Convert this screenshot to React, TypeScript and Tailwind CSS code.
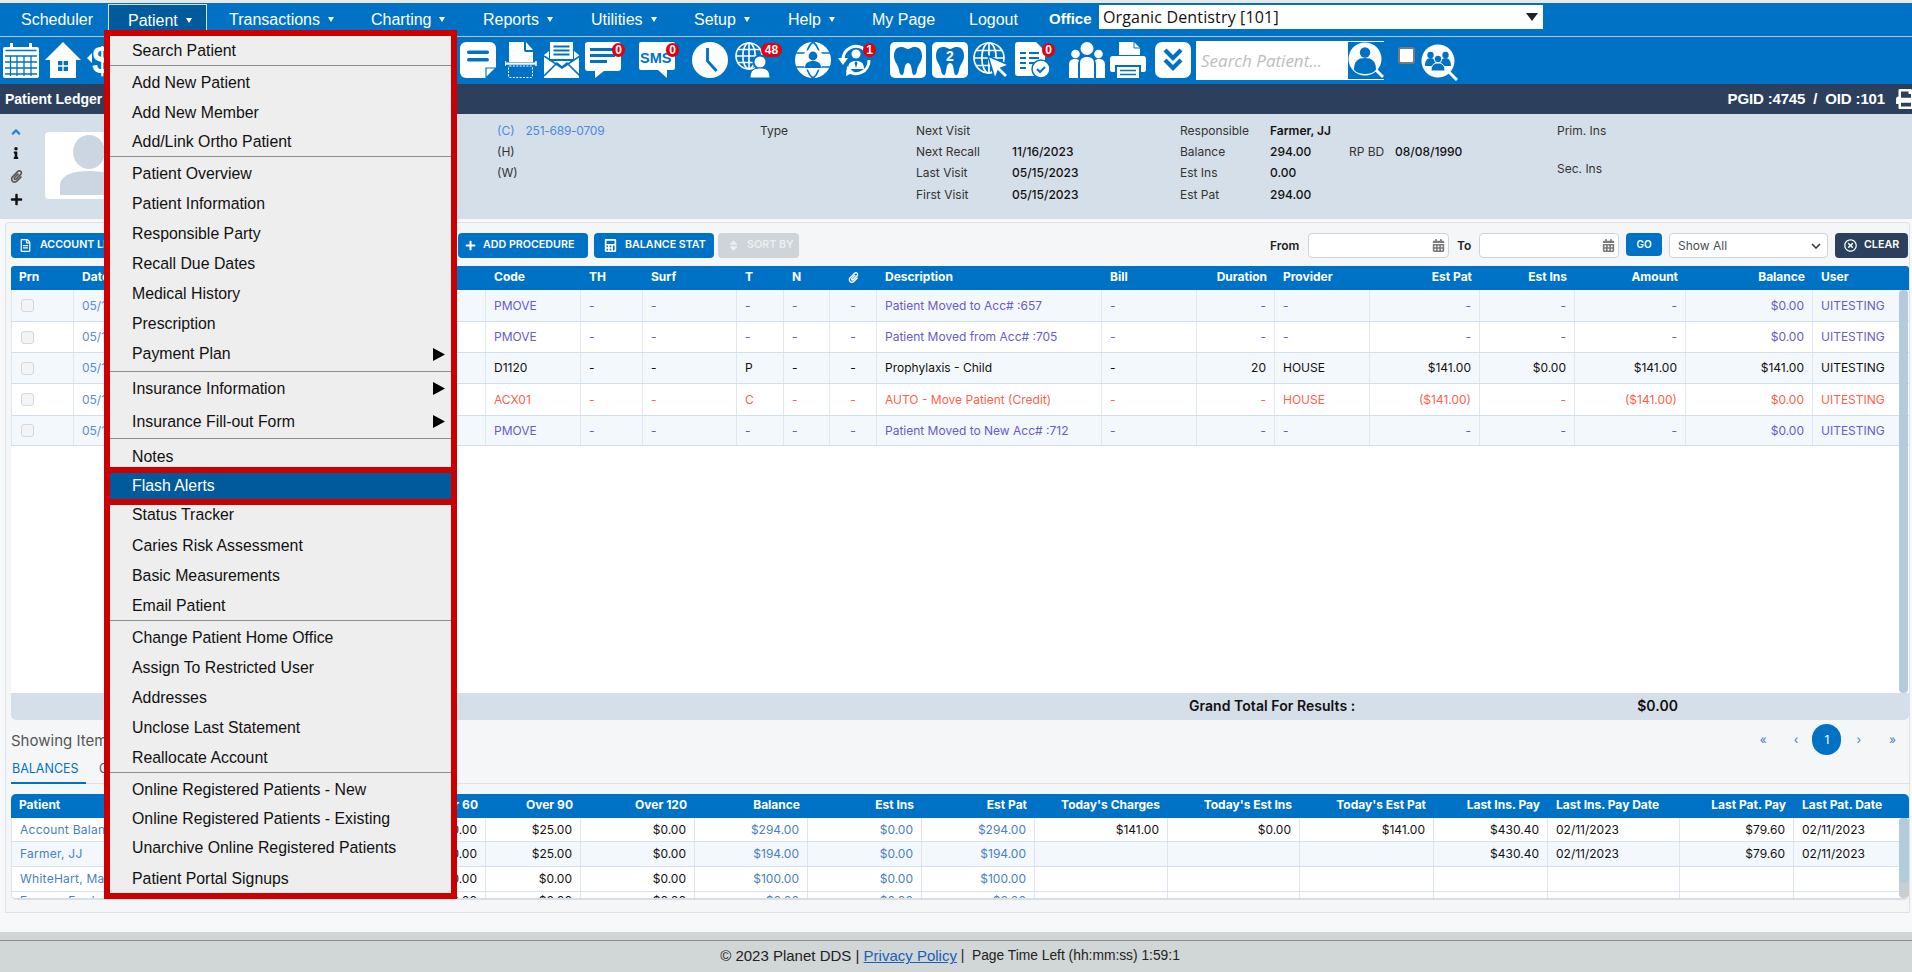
import React from "react";
import {
  FaAngleUp,
  FaCalculator,
  FaCalendarAlt,
  FaInfo,
  FaPaperclip,
  FaPlus,
  FaPrint,
  FaRegFileAlt,
  FaRegTimesCircle,
  FaSort,
} from "react-icons/fa";

const BL = "#0072c6";

function Svg({ children, w = 36 }: { children: React.ReactNode; w?: number }) {
  return (
    <svg viewBox={`0 0 ${w} 36`} width={w} height={36} className="block shrink-0" fill="#fff">
      {children}
    </svg>
  );
}

function Globe({ cx = 18, cy = 18, r = 17, color = "#fff", sw = 2 }: { cx?: number; cy?: number; r?: number; color?: string; sw?: number }) {
  return (
    <g fill="none" stroke={color} strokeWidth={sw}>
      <circle cx={cx} cy={cy} r={r} />
      <ellipse cx={cx} cy={cy} rx={r * 0.48} ry={r} />
      <path d={`M${cx} ${cy - r}V${cy + r}M${cx - r} ${cy}H${cx + r}M${cx - r * 0.88} ${cy - r * 0.5}H${cx + r * 0.88}M${cx - r * 0.88} ${cy + r * 0.5}H${cx + r * 0.88}`} />
    </g>
  );
}

const toothPath =
  "M11 5C15 5 16 7 18 7C20 7 21 5 25 5C30 5 32 9 32 14C32 20 28 22 27 28C26.500 32 25 33 24 33C22 33 22 28 21 24C20.500 22 19 21 18 21C17 21 15.500 22 15 24C14 28 14 33 12 33C11 33 9.500 32 9 28C8 22 4 20 4 14C4 9 6 5 11 5Z";

const Calendar = () => (
  <Svg>
    <path d="M2 5h5V1h3v4h16V1h3v4h5a2 2 0 0 1 2 2v27a2 2 0 0 1-2 2H2a2 2 0 0 1-2-2V7a2 2 0 0 1 2-2z" />
    <path d="M2.500 8.500h31M2 14h32M2 20h32M2 26h32M2 32h32M7.500 14v20M14 14v20M21 14v20M28 14v20" stroke={BL} strokeWidth="1.300" fill="none" />
  </Svg>
);
const Home = () => (
  <Svg>
    <path d="M18 0L36 18H31V36H5V18H0z" />
    <path d="M13 19h10v10H13z" fill={BL} />
    <path d="M18 19v10M13 24h10" stroke="#fff" strokeWidth="1.300" />
  </Svg>
);
const Dollar = () => (
  <Svg>
    <path d="M0 16l5-5v10z" />
    <text x="5" y="31" fontSize="36" fontWeight="700" fill="#fff" fontFamily="'Liberation Sans', sans-serif">$</text>
  </Svg>
);
const Note = () => (
  <Svg>
    <path d="M6 0h24a6 6 0 0 1 6 6v19L25 36H6a6 6 0 0 1-6-6V6a6 6 0 0 1 6-6z" />
    <rect x="7" y="8.500" width="22" height="3.400" rx="1.700" fill={BL} />
    <rect x="7" y="16" width="22" height="3.400" rx="1.700" fill={BL} />
    <path d="M26 35V26h9" fill="none" stroke={BL} strokeWidth="1.200" />
  </Svg>
);
const Scan = () => (
  <Svg>
    <path d="M4 0h15v8a2 2 0 0 0 2 2h7v10H4z" />
    <path d="M21 0l7 8h-7z" />
    <path d="M0 19v5M31 19v5" stroke="#fff" strokeWidth="1.500" />
    <rect x="0" y="20.500" width="31" height="2.200" />
    <rect x="3.500" y="24" width="24" height="11.500" rx="1" fill="none" stroke="#fff" strokeWidth="1" strokeDasharray="2 1.400" />
  </Svg>
);
const Envelope = () => (
  <Svg>
    <path d="M6 0h23v17H6z" />
    <path d="M9.500 4.500h16M9.500 8.500h16M9.500 12.500h16" stroke={BL} strokeWidth="1.800" />
    <path d="M0 13l5-4v10h25V9l5 4v23H0z" />
    <path d="M0 34l13-13 5 4 5-4 13 13M0 14l18 12 18-12" stroke={BL} strokeWidth="1.600" fill="none" />
  </Svg>
);
const Chat = () => (
  <Svg w={38}>
    <path d="M3 0h30a3 3 0 0 1 3 3v23a3 3 0 0 1-3 3H19l-9 7v-7H3a3 3 0 0 1-3-3V3a3 3 0 0 1 3-3z" />
    <path d="M5 7.500h25M5 13.500h25M5 19.500h17" stroke={BL} strokeWidth="2.800" />
  </Svg>
);
const Sms = () => (
  <Svg>
    <path d="M2 0h32a2 2 0 0 1 2 2v24a2 2 0 0 1-2 2h-6v8l-9-8H2a2 2 0 0 1-2-2V2a2 2 0 0 1 2-2z" />
    <text x="1" y="21" fontSize="14.500" fontWeight="700" fill={BL} fontFamily="'Liberation Sans', sans-serif">SMS</text>
  </Svg>
);
const Clock = () => (
  <Svg>
    <circle cx="18" cy="18" r="18" />
    <path d="M15.500 6v13l9 10" fill="none" stroke={BL} strokeWidth="2.800" />
  </Svg>
);
const GlobeUser = () => (
  <Svg>
    <Globe cx={14} cy={14} r={13} sw={1.600} />
    <circle cx="25" cy="20" r="7.500" fill={BL} />
    <circle cx="25" cy="20" r="5.500" />
    <path d="M15 36c0-8 4-10 10-10s10 2 10 10z" fill="#fff" stroke={BL} strokeWidth="1" />
  </Svg>
);
const GlobeCenter = () => (
  <Svg>
    <circle cx="18" cy="18" r="18" />
    <path d="M18 0C9 6 9 30 18 36M18 0C27 6 27 30 18 36M1 11h34M1 25h34" fill="none" stroke={BL} strokeWidth="1.600" />
    <circle cx="18" cy="18" r="11" />
    <circle cx="18" cy="14" r="4.400" fill={BL} />
    <path d="M10 26c0-5 3-7 8-7s8 2 8 7z" fill={BL} />
  </Svg>
);
const Refresh = () => (
  <Svg>
    <path d="M5 18A13 13 0 0 1 27 8" fill="none" stroke="#fff" strokeWidth="3" />
    <path d="M31 18A13 13 0 0 1 9 28" fill="none" stroke="#fff" strokeWidth="3" />
    <path d="M0 16l5 7 5-7z" />
    <path d="M9 24l7 6-8 4z" />
    <circle cx="18" cy="12" r="4.500" />
    <path d="M10 27c0-6 3-8 8-8s8 2 8 8z" />
    <path d="M18 19l-1.500 2 1.500 5 1.500-5z" fill={BL} />
  </Svg>
);
const Tooth = ({ two = false }: { two?: boolean }) => (
  <Svg>
    <rect width="36" height="36" rx="5" />
    <path d={toothPath} fill={BL} />
    {two && (
      <text x="18" y="19" textAnchor="middle" fontSize="14" fontWeight="700" fill="#fff" fontFamily="'Liberation Sans', sans-serif">2</text>
    )}
  </Svg>
);
const GlobeCursor = () => (
  <Svg>
    <Globe cx={16} cy={16} r={15} sw={1.700} />
    <path d="M15 14l21 9-8 3 7 7-3 3-7-7-3 8z" fill="#fff" stroke={BL} strokeWidth="1.500" />
  </Svg>
);
const DocCheck = () => (
  <Svg>
    <path d="M3 0h18l9 9v25H3a3 3 0 0 1-3-3V3a3 3 0 0 1 3-3z" />
    <path d="M5 11h6M14 11h10M5 16h6M14 16h10M5 21h6M14 21h5M5 26h6" stroke={BL} strokeWidth="1.900" />
    <circle cx="26" cy="27" r="9" fill="#fff" stroke={BL} strokeWidth="1.500" />
    <path d="M22 27l3 3 5-5" fill="none" stroke={BL} strokeWidth="2" />
  </Svg>
);
const People = () => (
  <Svg>
    <circle cx="6.500" cy="12" r="4.300" />
    <circle cx="29.500" cy="12" r="4.300" />
    <circle cx="18" cy="6.500" r="6.500" />
    <path d="M0 36V23c0-4 2-6 6-6 2 0 3 .5 4 1.500-.7 1-1 2.500-1 4.500v13z" />
    <path d="M36 36V23c0-4-2-6-6-6-2 0-3 .5-4 1.500.7 1 1 2.500 1 4.500v13z" />
    <path d="M11 36V22c0-5 2-7 7-7s7 2 7 7v14z" />
  </Svg>
);
const Printer = () => (
  <Svg>
    <path d="M9 0h15l6 6v7H9z" />
    <path d="M24 0v6h6" fill="none" stroke={BL} strokeWidth="1" />
    <path d="M3 14h30a3 3 0 0 1 3 3v11a2 2 0 0 1-2 2h-3v-7H5v7H2a2 2 0 0 1-2-2V17a3 3 0 0 1 3-3z" />
    <path d="M7 25h22v11H7z" />
    <path d="M10 28.500h16M10 32.500h16" stroke={BL} strokeWidth="1.700" />
  </Svg>
);
const Chevrons = () => (
  <Svg>
    <rect width="36" height="36" rx="7" />
    <path d="M10 8l8 8 8-8M10 18l8 8 8-8" fill="none" stroke={BL} strokeWidth="4.200" />
  </Svg>
);

function Badge({ children, className }: { children: React.ReactNode; className: string }) {
  return (
    <span className={`absolute flex h-[14px] items-center justify-center rounded-full bg-[#e3000f] text-[12px] font-bold leading-none text-white [font-family:'Liberation_Sans',sans-serif] ${className}`}>
      {children}
    </span>
  );
}

const menu: any[] = [
  { t: "Search Patient", h: "h-[29px]" },
  { sep: 1 },
  { t: "Add New Patient", h: "h-[31px] pt-[2px]" },
  { t: "Add New Member", h: "h-[30px] pt-[2px]" },
  { t: "Add/Link Ortho Patient", h: "h-[29px]" },
  { sep: 1 },
  { t: "Patient Overview", h: "h-[31px] pt-[2px]" },
  { t: "Patient Information", h: "h-[30px] pt-[2px]" },
  { t: "Responsible Party", h: "h-[30px] pt-[2px]" },
  { t: "Recall Due Dates", h: "h-[30px] pt-[2px]" },
  { t: "Medical History", h: "h-[30px] pt-[2px]" },
  { t: "Prescription", h: "h-[30px] pt-[2px]" },
  { t: "Payment Plan", h: "h-[30px] pt-[2px]", arrow: 1 },
  { sep: 1, extra: "mt-[3px]" },
  { t: "Insurance Information", h: "h-[33px]", arrow: 1 },
  { t: "Insurance Fill-out Form", h: "h-[33px]", arrow: 1 },
  { sep: 1 },
  { t: "Notes", h: "h-[28px] pt-[7px]" },
  { t: "Flash Alerts", active: 1 },
  { t: "Status Tracker", h: "h-[25px] pb-[5px]" },
  { t: "Caries Risk Assessment", h: "h-[30px] pt-[2px]" },
  { t: "Basic Measurements", h: "h-[30px] pt-[2px]" },
  { t: "Email Patient", h: "h-[30px] pt-[2px]" },
  { sep: 1 },
  { t: "Change Patient Home Office", h: "h-[31px] pt-[2px]" },
  { t: "Assign To Restricted User", h: "h-[30px] pt-[2px]" },
  { t: "Addresses", h: "h-[30px] pt-[2px]" },
  { t: "Unclose Last Statement", h: "h-[30px] pt-[2px]" },
  { t: "Reallocate Account", h: "h-[30px] pt-[2px]" },
  { sep: 1 },
  { t: "Online Registered Patients - New", h: "h-[31px] pt-[2px]" },
  { t: "Online Registered Patients - Existing", h: "h-[29px]" },
  { t: "Unarchive Online Registered Patients", h: "h-[30px]" },
  { t: "Patient Portal Signups", h: "h-[30px] pt-[2px]" },
];

function PatientMenu() {
  return (
    <div className="absolute left-[104px] top-[30px] z-20 h-[869px] w-[353px] border-[6px] border-[#cc0000] bg-[#eeeeee] text-[15.85px] text-[#111] [font-family:'Liberation_Sans',Arial,sans-serif]">
      {menu.map((m, i) =>
        m.sep ? (
          <div key={i} className={`h-px bg-[#8c8c8c] ${m.extra || ""}`} />
        ) : m.active ? (
          <div key={i} className="flex h-[38px] items-center border-y-[6px] border-[#cc0000] bg-[#005a9c] pl-[22px] text-white">
            {m.t}
          </div>
        ) : (
          <div key={i} className={`flex items-center pl-[22px] ${m.h}`}>
            <span>{m.t}</span>
            {m.arrow && (
              <svg viewBox="0 0 12 13" className="ml-auto mr-[6px] h-[13px] w-[12px]">
                <path d="M0 0l12 6.500L0 13z" fill="#000" />
              </svg>
            )}
          </div>
        )
      )}
    </div>
  );
}

const navItems = [
  { t: "Scheduler", w: "w-[108px] pl-[21px]" },
  { t: "Patient", w: "w-[99px] pl-[19px]", arrow: 1, active: 1 },
  { t: "Transactions", w: "w-[143px] pl-[22px]", arrow: 1 },
  { t: "Charting", w: "w-[114px] pl-[21px]", arrow: 1 },
  { t: "Reports", w: "w-[108px] pl-[19px]", arrow: 1 },
  { t: "Utilities", w: "w-[103px] pl-[19px]", arrow: 1 },
  { t: "Setup", w: "w-[93px] pl-[19px]", arrow: 1 },
  { t: "Help", w: "w-[85px] pl-[20px]", arrow: 1 },
  { t: "My Page", w: "w-[97px] pl-[19px]" },
  { t: "Logout", w: "w-[79px] pl-[19px]" },
];

function Nav() {
  return (
    <div className="flex h-[34px] items-stretch border-b border-[#b8c4cc] bg-[#0072c6] text-[16px] text-white [font-family:'Liberation_Sans',Arial,sans-serif]">
      {navItems.map((n) => (
        <div
          key={n.t}
          className={`flex items-center ${n.w} ${n.active ? "mt-[1px] border border-b-0 border-[#cfe0ee] bg-[#005a9c]" : ""}`}
        >
          <span>{n.t}</span>
          {n.arrow && (
            <svg viewBox="0 0 6 5" className="ml-[8px] h-[5px] w-[6px]">
              <path d="M0 0h6L3 5z" fill="#fff" />
            </svg>
          )}
        </div>
      ))}
      <div className="flex w-[70px] items-center pl-[20px] text-[15px] font-bold">Office</div>
      <div className="mb-[7px] mt-[2px] flex w-[444px] items-center justify-between bg-white pl-[4px] pr-[5px] text-[16px] tracking-[0.15px] text-[#111] [font-family:'Open_Sans',sans-serif]">
        <span>Organic Dentistry [101]</span>
        <svg viewBox="0 0 12 8" className="h-[8px] w-[12px]">
          <path d="M0 0h12L6 8z" fill="#222" />
        </svg>
      </div>
    </div>
  );
}

function Toolbar() {
  return (
    <div className="flex h-[47px] items-start bg-[#0072c6] pl-[3px] pt-[5px]">
      <Calendar />
      <div className="ml-[6px]"><Home /></div>
      <div className="ml-[6px]"><Dollar /></div>
      <div className="ml-[337px]"><Note /></div>
      <div className="ml-[9px]"><Scan /></div>
      <div className="ml-[3px]"><Envelope /></div>
      <div className="relative ml-[5px] w-[36px]">
        <Chat />
        <Badge className="left-[27px] top-[1px] w-[13px]">0</Badge>
      </div>
      <div className="relative ml-[18px]">
        <Sms />
        <Badge className="left-[27px] top-[1px] w-[13px]">0</Badge>
      </div>
      <div className="ml-[17px]"><Clock /></div>
      <div className="relative ml-[7px]">
        <GlobeUser />
        <Badge className="left-[26px] top-[1px] w-[21px]">48</Badge>
      </div>
      <div className="ml-[24px]"><GlobeCenter /></div>
      <div className="relative ml-[7px]">
        <Refresh />
        <Badge className="left-[25px] top-[1px] w-[13px]">1</Badge>
      </div>
      <div className="ml-[16px]"><Tooth /></div>
      <div className="ml-[6px]"><Tooth two /></div>
      <div className="ml-[5px]"><GlobeCursor /></div>
      <div className="relative ml-[6px]">
        <DocCheck />
        <Badge className="left-[27px] top-[1px] w-[13px]">0</Badge>
      </div>
      <div className="ml-[18px]"><People /></div>
      <div className="ml-[5px]"><Printer /></div>
      <div className="ml-[9px]"><Chevrons /></div>
      <div className="ml-[5px] -mt-px flex h-[39px] w-[188px] items-center bg-white">
        <span className="flex-1 pl-[5px] text-[17px] italic text-[#bdbdbd] [font-family:'Open_Sans',sans-serif]">Search Patient...</span>
        <div className="h-[37px] w-[36px] bg-[#0072c6]">
          <svg viewBox="0 0 36 37" className="h-[37px] w-[36px]">
            <circle cx="17" cy="17" r="16.500" fill="#fff" />
            <circle cx="17" cy="10.500" r="5.200" fill={BL} />
            <path d="M6 28c0-9 4-12 11-12s11 3 11 12c-3 3-7 4-11 4s-8-1-11-4z" fill={BL} />
            <path d="M28 28l7 7" stroke="#fff" strokeWidth="3" />
          </svg>
        </div>
      </div>
      <div className="ml-[14px] mt-[5px] h-[17px] w-[17px] rounded-[3px] border-2 border-[#7a7a7a] bg-white" />
      <div className="ml-[6px] mt-[2px]">
        <svg viewBox="0 0 37 37" className="h-[37px] w-[37px]">
          <circle cx="17" cy="17" r="16.500" fill="#fff" />
          <g fill={BL}>
            <circle cx="9.500" cy="11" r="3.200" />
            <circle cx="24.500" cy="11" r="3.200" />
            <path d="M4 22c0-5 2-8 5.500-8s5.500 3 5.500 8zM19 22c0-5 2-8 5.500-8s5.500 3 5.500 8z" />
            <circle cx="17" cy="15" r="3.800" stroke="#fff" strokeWidth="1" />
            <path d="M10 27c0-6 3-8 7-8s7 2 7 8z" stroke="#fff" strokeWidth="1" />
          </g>
          <path d="M28 28l8 8" stroke="#fff" strokeWidth="3" />
        </svg>
      </div>
    </div>
  );
}

function DarkBar() {
  return (
    <div className="flex h-[30px] items-center justify-between bg-[#2c405e] font-bold text-white [font-family:'Liberation_Sans',Arial,sans-serif]">
      <span className="pl-[5px] text-[14px]">Patient Ledger</span>
      <div className="flex items-center">
        <span className="text-[15px] tracking-[-0.15px]">PGID :4745&nbsp; / &nbsp;OID :101</span>
        <FaPrint className="ml-[11px] mr-[-4px] text-[20px]" />
      </div>
    </div>
  );
}

function InfoRows({ rows, className }: { rows: React.ReactNode[]; className: string }) {
  const hs = ["h-[21px]", "h-[21px]", "h-[22px]", "h-[21px]"];
  return (
    <div className={`flex flex-col ${className}`}>
      {rows.map((r, i) => (
        <div key={i} className={`flex items-center ${hs[i]}`}>{r}</div>
      ))}
    </div>
  );
}

const Val = ({ children, cls }: { children: React.ReactNode; cls: string }) => (
  <span className={`font-medium text-[#111] ${cls}`}>{children}</span>
);
const Lab = ({ children, cls }: { children: React.ReactNode; cls: string }) => <span className={cls}>{children}</span>;

function InfoPanel() {
  return (
    <div className="flex h-[105px] bg-[#d5dfe9] text-[12px] text-[#333]">
      <div className="flex w-[32px] shrink-0 flex-col items-center pt-[11px]">
        <FaAngleUp className="text-[14px] text-[#2b7fd4]" />
        <FaInfo className="mt-[8px] text-[12px] text-[#111]" />
        <FaPaperclip className="mt-[11px] text-[13px] text-[#555]" />
        <FaPlus className="mt-[10px] text-[13px] text-[#111]" />
      </div>
      <div className="ml-[13px] mt-[18px] h-[67px] w-[85px] shrink-0 overflow-hidden rounded-[4px] bg-white">
        <svg viewBox="0 0 85 67" className="h-[67px] w-[85px]">
          <ellipse cx="44" cy="20" rx="16" ry="17" fill="#ccd6e3" />
          <path d="M15 63V54c0-11 13-15 29-15s29 4 29 15v9z" fill="#ccd6e3" />
        </svg>
      </div>
      <div className="w-[367px] shrink-0" />
      <InfoRows
        className="w-[263px] shrink-0 pt-[6px]"
        rows={[
          <span className="text-[#4b8bdc]"><span className="mr-[11px]">(C)</span><span className="tracking-[-0.25px]">251-689-0709</span></span>,
          "(H)",
          "(W)",
          "",
        ]}
      />
      <InfoRows className="w-[156px] shrink-0 pt-[6px]" rows={["Type", "", "", ""]} />
      <InfoRows
        className="w-[264px] shrink-0 pt-[6px]"
        rows={[
          "Next Visit",
          <><Lab cls="w-[96px]">Next Recall</Lab><Val cls="">11/16/2023</Val></>,
          <><Lab cls="w-[96px]">Last Visit</Lab><Val cls="">05/15/2023</Val></>,
          <><Lab cls="w-[96px]">First Visit</Lab><Val cls="">05/15/2023</Val></>,
        ]}
      />
      <InfoRows
        className="w-[377px] shrink-0 pt-[6px]"
        rows={[
          <><Lab cls="w-[90px]">Responsible</Lab><Val cls="font-semibold">Farmer, JJ</Val></>,
          <><Lab cls="w-[90px]">Balance</Lab><Val cls="w-[79px]">294.00</Val><Lab cls="w-[46px]">RP BD</Lab><Val cls="">08/08/1990</Val></>,
          <><Lab cls="w-[90px]">Est Ins</Lab><Val cls="">0.00</Val></>,
          <><Lab cls="w-[90px]">Est Pat</Lab><Val cls="">294.00</Val></>,
        ]}
      />
      <div className="flex flex-col pt-[6px]">
        <div className="flex h-[21px] items-center">Prim. Ins</div>
        <div className="mt-[17px] flex h-[21px] items-center">Sec. Ins</div>
      </div>
    </div>
  );
}

function ActionButton({ icon, label, className }: { icon: React.ReactNode; label: string; className: string }) {
  return (
    <div className={`flex h-[25px] items-center rounded-[4px] text-[10.7px] font-semibold ${className}`}>
      {icon}
      <span>{label}</span>
    </div>
  );
}

function DateInput({ className }: { className: string }) {
  return (
    <div className={`flex h-[25px] items-center justify-end rounded-[4px] border border-[#ced4da] bg-white pr-[3px] ${className}`}>
      <FaCalendarAlt className="text-[13px] text-[#7a7a7a]" />
    </div>
  );
}

function Controls() {
  return (
    <div className="flex h-[25px] items-center pr-px">
      <ActionButton
        className="w-[139px] bg-[#0072c6] pl-[8px] text-white"
        icon={<FaRegFileAlt className="mr-[8px] text-[13px]" />}
        label="ACCOUNT LEDGER"
      />
      <ActionButton
        className="ml-[308px] w-[130px] bg-[#0072c6] pl-[7px] text-white"
        icon={<FaPlus className="mr-[7px] text-[11px]" />}
        label="ADD PROCEDURE"
      />
      <ActionButton
        className="ml-[6px] w-[120px] bg-[#0072c6] pl-[10px] text-white"
        icon={<FaCalculator className="mr-[8px] text-[13px]" />}
        label="BALANCE STAT"
      />
      <ActionButton
        className="ml-[4px] w-[81px] bg-[#ced4da] pl-[9px] text-[#eceff1]"
        icon={<FaSort className="mr-[7px] text-[13px]" />}
        label="SORT BY"
      />
      <span className="ml-auto w-[38px] text-[12px] font-semibold text-[#222]">From</span>
      <DateInput className="w-[141px]" />
      <span className="ml-[8px] w-[22px] text-[12px] font-semibold text-[#222]">To</span>
      <DateInput className="w-[140px]" />
      <div className="ml-[7px] flex h-[23px] w-[36px] items-center justify-center self-start rounded-[4px] bg-[#0072c6] text-[10px] font-semibold text-white">GO</div>
      <div className="ml-[7px] flex h-[25px] w-[159px] items-center justify-between rounded-[4px] border border-[#ced4da] bg-white pl-[8px] pr-[6px] text-[12px] text-[#495057]">
        <span>Show All</span>
        <svg viewBox="0 0 10 6" className="h-[6px] w-[10px]"><path d="M1 1l4 4 4-4" fill="none" stroke="#333" strokeWidth="1.500" /></svg>
      </div>
      <ActionButton
        className="ml-[7px] w-[73px] bg-[#2c405e] pl-[9px] text-white"
        icon={<FaRegTimesCircle className="mr-[7px] text-[13px]" />}
        label="CLEAR"
      />
    </div>
  );
}

const P = "text-[#6a5acd]";
const K = "text-[#111]";
const R = "text-[#ff5f4d]";

const mainHead: React.ReactNode[] = ["Prn", "Date", "Code", "TH", "Surf", "T", "N", <FaPaperclip className="inline text-[11px]" />, "Description", "Bill", "Duration", "Provider", "Est Pat", "Est Ins", "Amount", "Balance", "User"];
const mainRows = [
  { c: P, h: "h-[32px]", bg: "bg-[#f3f8fd]", v: ["PMOVE", "-", "-", "-", "-", "-", "Patient Moved to Acc# :657", "-", "-", "-", "-", "-", "-", "$0.00", "UITESTING"] },
  { c: P, h: "h-[31px]", bg: "bg-white", v: ["PMOVE", "-", "-", "-", "-", "-", "Patient Moved from Acc# :705", "-", "-", "-", "-", "-", "-", "$0.00", "UITESTING"] },
  { c: K, h: "h-[31px]", bg: "bg-[#f3f8fd]", v: ["D1120", "-", "-", "P", "-", "-", "Prophylaxis - Child", "-", "20", "HOUSE", "$141.00", "$0.00", "$141.00", "$141.00", "UITESTING"] },
  { c: R, h: "h-[32px]", bg: "bg-white", v: ["ACX01", "-", "-", "C", "-", "-", "AUTO - Move Patient (Credit)", "-", "-", "HOUSE", "($141.00)", "-", "($141.00)", "$0.00", "UITESTING"] },
  { c: P, h: "h-[30px]", bg: "bg-[#f3f8fd]", v: ["PMOVE", "-", "-", "-", "-", "-", "Patient Moved to New Acc# :712", "-", "-", "-", "-", "-", "-", "$0.00", "UITESTING"] },
];
const mainGrid = "grid grid-cols-[63px_412px_95px_62px_94px_47px_46px_47px_225px_95px_78px_95px_110px_95px_111px_127px_94px]";
const mainRight = [10, 12, 13, 14, 15];

function MainTable() {
  return (
    <div className="relative">
      <div className={`${mainGrid} h-[24px] items-center rounded-t-[3px] bg-[#0072c6] pb-[2px] text-[12px] font-bold text-white`}>
        {mainHead.map((h, i) => (
          <div key={i} className={`px-[8px] ${mainRight.includes(i) ? "text-right" : ""} ${i === 7 ? "text-center" : ""}`}>{h}</div>
        ))}
      </div>
      <div className="h-[403px] bg-white">
        {mainRows.map((r, ri) => {
          const cells = ["", "05/15/2023", ...r.v];
          return (
            <div key={ri} className={`${mainGrid} ${r.h} ${r.bg} ${r.c} border-b-[1.5px] border-[#d3deea] text-[12px]`}>
              {cells.map((c, i) => (
                <div key={i} className={`flex items-center border-r border-[#dfe7ef] px-[8px] ${mainRight.includes(i) ? "justify-end" : ""} ${i === 7 ? "justify-center" : ""} ${i === 1 ? "text-[#5b8bd0]" : ""} ${i === 0 ? "border-l" : ""}`}>
                  {i === 0 ? <span className="ml-px h-[13px] w-[13px] rounded-[3px] border border-[#d3d8de] bg-[#f3f4f6]" /> : c}
                </div>
              ))}
            </div>
          );
        })}
      </div>
      <div className="absolute bottom-[27px] right-px top-[24px] w-[9px] rounded-[4px] bg-[#b4cbdc]" />
      <div className="flex h-[27px] items-center rounded-b-[5px] bg-[#d5dfe9] pb-[2px] text-[14px] font-semibold tracking-[0.05px] text-[#111]">
        <span className="ml-[1178px]">Grand Total For Results :</span>
        <span className="ml-[282px]">$0.00</span>
      </div>
    </div>
  );
}

function Pager() {
  return (
    <div className="flex h-[40px] items-start text-[#333]">
      <span className="mt-[10px] text-[15px] text-[#555]">Showing Items 1 - 5 of 5</span>
      <div className="ml-auto mr-[13px] mt-[4px] flex h-[31px] items-center text-[12px] text-[#4a7fc1]">
        <span>«</span>
        <span className="ml-[27px]">‹</span>
        <span className="ml-[14px] flex h-[31px] w-[29px] items-center justify-center rounded-full bg-[#0072c6] text-white">1</span>
        <span className="ml-[15px]">›</span>
        <span className="ml-[28px]">»</span>
      </div>
    </div>
  );
}

function Tabs() {
  return (
    <div className="flex h-[24px] items-start border-b border-[#dee2e6] text-[12.5px]">
      <div className="h-[24px] w-[75px] border-b-2 border-[#0072c6] pl-px text-[#0072c6]">BALANCES</div>
      <div className="ml-[13px] text-[#555]">CHARGES</div>
    </div>
  );
}

const lowerHead = ["Patient", "Over 60", "Over 90", "Over 120", "Balance", "Est Ins", "Est Pat", "Today's Charges", "Today's Est Ins", "Today's Est Pat", "Last Ins. Pay", "Last Ins. Pay Date", "Last Pat. Pay", "Last Pat. Date"];
const lowerGrid = "grid grid-cols-[289px_186px_95px_114px_113px_114px_113px_133px_132px_134px_114px_132px_114px_115px]";
const lowerRows = [
  { h: "h-[24px]", bg: "bg-white", v: ["Account Balance", "$0.00", "$25.00", "$0.00", "$294.00", "$0.00", "$294.00", "$141.00", "$0.00", "$141.00", "$430.40", "02/11/2023", "$79.60", "02/11/2023"] },
  { h: "h-[25px]", bg: "bg-[#f3f8fd]", v: ["Farmer, JJ", "$0.00", "$25.00", "$0.00", "$194.00", "$0.00", "$194.00", "", "", "", "$430.40", "02/11/2023", "$79.60", "02/11/2023"] },
  { h: "h-[25px]", bg: "bg-white", v: ["WhiteHart, Mark", "$0.00", "$0.00", "$0.00", "$100.00", "$0.00", "$100.00", "", "", "", "", "", "", ""] },
  { h: "h-[18px]", bg: "bg-white", v: ["Farmer, Fred", "$0.00", "$0.00", "$0.00", "$0.00", "$0.00", "$0.00", "", "", "", "", "", "", ""] },
];
const leftCols = [0, 11, 13];
const linkCols = [0, 4, 5, 6];

function LowerTable() {
  return (
    <div className="relative mt-[10px] h-[106px] overflow-hidden rounded-[5px] border-b-2 border-[#d8dee5]">
      <div className={`${lowerGrid} h-[24px] items-center bg-[#0072c6] pb-[2px] text-[12px] font-bold text-white`}>
        {lowerHead.map((h, i) => (
          <div key={i} className={`whitespace-nowrap px-[8px] ${leftCols.includes(i) ? "" : "text-right"}`}>{h}</div>
        ))}
      </div>
      {lowerRows.map((r, ri) => (
        <div key={ri} className={`${lowerGrid} ${r.h} ${r.bg} border-b border-[#d8e0ee] text-[12px] text-[#111]`}>
          {r.v.map((c, i) => (
            <div key={i} className={`flex items-center whitespace-nowrap border-r border-[#e0e4ee] px-[8px] ${leftCols.includes(i) ? "" : "justify-end"} ${linkCols.includes(i) ? "text-[#4a7fc1]" : ""} ${i === 0 ? "border-l tracking-[0.25px]" : ""}`}>{c}</div>
          ))}
        </div>
      ))}
      <div className="absolute bottom-0 right-0 top-[24px] w-[10px] rounded-[4px] bg-[#c9ced3]">
        <div className="h-[65px] rounded-[4px] bg-[#b4cbdc]" />
      </div>
    </div>
  );
}

export default function App() {
  return (
    <div className="relative flex h-[972px] w-[1912px] flex-col overflow-hidden bg-[#f6f8f9] [font-family:'Inter',sans-serif]">
      <div className="h-[3px] bg-[#e8e8e8]" />
      <Nav />
      <Toolbar />
      <DarkBar />
      <InfoPanel />
      <div className="flex-1 px-[2px] pl-[5px] pt-[3px]">
        <div className="h-[691px] rounded-t-[4px] border border-[#dde2e8] bg-[#f5f6f8] pl-[5px] pt-[10px]">
          <Controls />
          <div className="mt-[8px]">
            <MainTable />
          </div>
          <Pager />
          <Tabs />
          <LowerTable />
        </div>
      </div>
      <div className="flex h-[40px] flex-col bg-[#d1d6d7] [font-family:'Liberation_Sans',Arial,sans-serif]">
        <div className="mt-[8px] h-[1px] bg-[#8a8a8a]" />
        <div className="flex flex-1 items-center justify-center whitespace-pre pr-[12px] text-[13.8px] text-[#222]">
          <span className="text-[15px]">© 2023 Planet DDS | </span>
          <span className="text-[15px] text-[#1a5fb4] underline">Privacy Policy</span>
          <span> |  Page Time Left (hh:mm:ss) 1:59:1</span>
        </div>
      </div>
      <PatientMenu />
    </div>
  );
}
